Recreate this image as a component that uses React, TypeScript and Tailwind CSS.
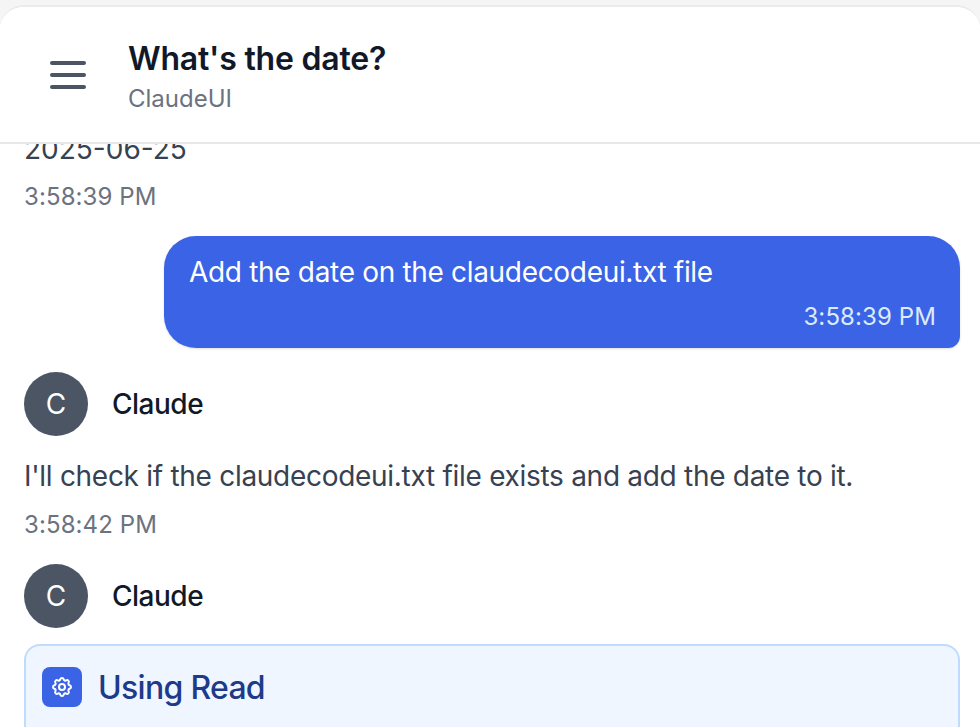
const Avatar = () => (
  <div className="flex items-center gap-[25px]">
    <div className="flex h-16 w-16 items-center justify-center rounded-full bg-[#4b5563] text-[28px] text-white">C</div>
    <div className="-ml-px text-[28px] font-medium tracking-[-0.5px] text-[#111827]">Claude</div>
  </div>
);

const Time = ({ children }: { children: string }) => (
  <div className="text-2xl leading-8 tracking-[0.1px] text-[#6b7280]">{children}</div>
);

export default function App() {
  return (
    <div className="h-[727px] w-[980px] overflow-hidden bg-[#f5f5f5] pt-[5px] font-['Inter',sans-serif]">
      <div className="flex h-full flex-col overflow-hidden rounded-t-[24px] border-t-2 border-[#ebebeb] bg-white">
        <header className="z-10 flex h-[137px] shrink-0 items-center border-b-2 border-[#e5e7eb] bg-white pl-11">
          <svg className="h-12 w-12 text-[#4b5563]" fill="none" stroke="currentColor" strokeWidth={2} strokeLinecap="round" strokeLinejoin="round" viewBox="0 0 24 24">
            <path d="M4 6h16M4 12h16M4 18h16" />
          </svg>
          <div className="ml-9 pt-[5px]">
            <h1 className="text-[32px] leading-10 font-semibold tracking-[-0.2px] text-[#111827]">What's the date?</h1>
            <p className="mt-1 text-2xl leading-8 text-[#6b7280]">ClaudeUI</p>
          </div>
        </header>
        <main className="flex-1 overflow-hidden px-5">
          <div className="mt-[-17px] px-1 text-[28px] leading-[44px] text-[#374151]">2025-06-25</div>
          <div className="mt-[10px] px-1"><Time>3:58:39 PM</Time></div>
          <div className="mt-[23px] ml-[144px] rounded-[32px] rounded-br-[12px] bg-[#3a63e5] pt-4 pr-6 pb-[15px] pl-[25px] shadow-sm">
            <p className="text-[28px] leading-10 tracking-[-0.32px] text-white">Add the date on the claudecodeui.txt file</p>
            <p className="mt-[9px] text-right text-2xl leading-8 tracking-[0.1px] text-[#dbeafe]">3:58:39 PM</p>
          </div>
          <div className="mt-6 px-1">
            <Avatar />
            <p className="mt-4 text-[28px] leading-12 tracking-[-0.29px] text-[#374151]">I'll check if the claudecodeui.txt file exists and add the date to it.</p>
            <div className="mt-[9px]"><Time>3:58:42 PM</Time></div>
          </div>
          <div className="mt-[23px] px-1">
            <Avatar />
          </div>
          <div className="mt-4 ml-1 h-[200px] rounded-[16px] border-2 border-[#bfdbfe] bg-[#eff6ff] px-4 pt-4">
            <div className="flex items-center gap-[17px]">
              <div className="flex h-10 w-10 items-center justify-center rounded-lg bg-[#3a63e5]">
                <svg className="h-6 w-6 text-white" fill="none" stroke="currentColor" strokeWidth={2} strokeLinecap="round" strokeLinejoin="round" viewBox="0 0 24 24">
                  <path d="M10.325 4.317c.426-1.756 2.924-1.756 3.35 0a1.724 1.724 0 002.573 1.066c1.543-.94 3.31.826 2.37 2.37a1.724 1.724 0 001.065 2.572c1.756.426 1.756 2.924 0 3.35a1.724 1.724 0 00-1.066 2.573c.94 1.543-.826 3.31-2.37 2.37a1.724 1.724 0 00-2.572 1.065c-.426 1.756-2.924 1.756-3.35 0a1.724 1.724 0 00-2.573-1.066c-1.543.94-3.31-.826-2.37-2.37a1.724 1.724 0 00-1.065-2.572c-1.756-.426-1.756-2.924 0-3.35a1.724 1.724 0 001.066-2.573c-.94-1.543.826-3.31 2.37-2.37.996.608 2.296.07 2.572-1.065z" />
                  <path d="M15 12a3 3 0 11-6 0 3 3 0 016 0z" />
                </svg>
              </div>
              <span className="-ml-px pt-[2px] text-[32px] font-medium tracking-[-0.7px] text-[#1e3a8a]">Using Read</span>
            </div>
          </div>
        </main>
      </div>
    </div>
  );
}
